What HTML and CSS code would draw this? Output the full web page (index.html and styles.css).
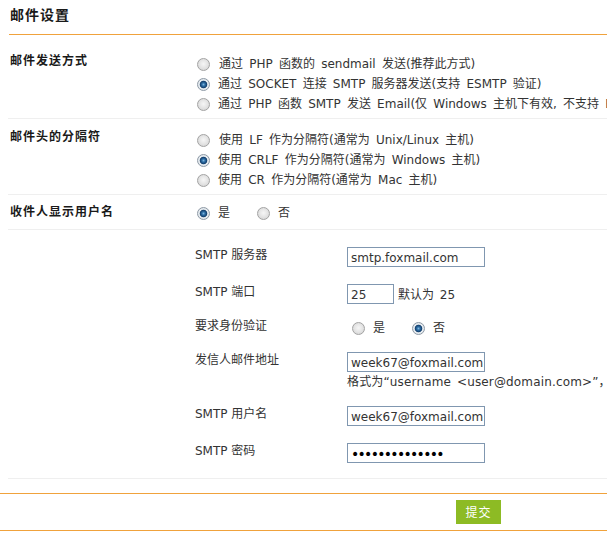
FILE: index.html
```html
<!DOCTYPE html>
<html lang="zh-CN">
<head>
<meta charset="utf-8">
<title>邮件设置</title>
<link rel="stylesheet" href="styles.css">
</head>
<body>
<div class="page">
  <div class="title-bar"><h1 class="title">邮件设置</h1></div>
  <form class="settings">
    <div class="row row-1">
      <div class="row-label">邮件发送方式</div>
      <div class="row-body">
        <label class="opt"><input class="radio" type="radio" name="mailsend"><span class="first-text">通过 PHP 函数的 sendmail 发送(推荐此方式)</span></label>
        <label class="opt"><input class="radio" type="radio" name="mailsend" checked><span>通过 SOCKET 连接 SMTP 服务器发送(支持 ESMTP 验证)</span></label>
        <label class="opt"><input class="radio" type="radio" name="mailsend"><span>通过 PHP 函数 SMTP 发送 Email(仅 Windows 主机下有效, 不支持 ESMTP 验证)</span></label>
      </div>
    </div>
    <div class="row row-2">
      <div class="row-label">邮件头的分隔符</div>
      <div class="row-body">
        <label class="opt"><input class="radio" type="radio" name="delim"><span class="first-text">使用 LF 作为分隔符(通常为 Unix/Linux 主机)</span></label>
        <label class="opt"><input class="radio" type="radio" name="delim" checked><span>使用 CRLF 作为分隔符(通常为 Windows 主机)</span></label>
        <label class="opt"><input class="radio" type="radio" name="delim"><span>使用 CR 作为分隔符(通常为 Mac 主机)</span></label>
      </div>
    </div>
    <div class="row row-3">
      <div class="row-label">收件人显示用户名</div>
      <div class="row-body inline-opts">
        <label class="opt"><input class="radio" type="radio" name="showname" checked><span>是</span></label>
        <label class="opt"><input class="radio" type="radio" name="showname"><span>否</span></label>
      </div>
    </div>
    <div class="smtp">
      <div class="field f-server">
        <div class="field-label">SMTP 服务器</div>
        <div class="field-body"><input class="text-input" type="text" value="smtp.foxmail.com"></div>
      </div>
      <div class="field f-port">
        <div class="field-label">SMTP 端口</div>
        <div class="field-body port-body"><input class="text-input port-input" type="text" value="25"><span class="port-note">默认为 25</span></div>
      </div>
      <div class="field f-auth">
        <div class="field-label">要求身份验证</div>
        <div class="field-body inline-opts auth-opts">
          <label class="opt"><input class="radio" type="radio" name="auth"><span>是</span></label>
          <label class="opt"><input class="radio" type="radio" name="auth" checked><span>否</span></label>
        </div>
      </div>
      <div class="field f-from">
        <div class="field-label">发信人邮件地址</div>
        <div class="field-body">
          <input class="text-input" type="text" value="week67@foxmail.com">
          <div class="hint">格式为“username &lt;user@domain.com&gt;”，</div>
        </div>
      </div>
      <div class="field f-user">
        <div class="field-label">SMTP 用户名</div>
        <div class="field-body"><input class="text-input" type="text" value="week67@foxmail.com"></div>
      </div>
      <div class="field f-pass">
        <div class="field-label">SMTP 密码</div>
        <div class="field-body"><input class="text-input pass-input" type="password" value="abcdefghijklmn"></div>
      </div>
    </div>
  </form>
  <div class="footer"><button class="submit" type="button">提交</button></div>
</div>
</body>
</html>
```
FILE: styles.css
```css
html, body {
  margin: 0;
  padding: 0;
  background: #fff;
  overflow: hidden;
}
body {
  font-family: "DejaVu Sans", "Noto Sans CJK SC", sans-serif;
  font-size: 12px;
  line-height: 16px;
  color: #333;
}
.title-bar {
  margin-left: 9px;
  height: 34px;
  border-bottom: 1px solid #f0a23c;
}
.title {
  margin: 0;
  padding: 7px 0 0 1px;
  font-size: 14px;
  line-height: 16px;
  font-weight: bold;
  letter-spacing: 1px;
  color: #1a1a1a;
}
.settings {
  margin: 8px 0 0 8px;
}
.row {
  display: flex;
  border-bottom: 1px solid #efefef;
}
.row-label {
  width: 189px;
  flex: none;
  box-sizing: border-box;
  padding-left: 2px;
  font-weight: bold;
  letter-spacing: 1px;
  line-height: 14px;
  color: #1a1a1a;
}
.row-body {
  flex: 1;
  min-width: 0;
}
.row-1, .row-2 {
  padding: 11px 0 4px;
}
.row-3 {
  padding: 8px 0 6px;
}
.row-3 .row-label {
  padding-top: 2px;
}
.opt {
  display: flex;
  align-items: center;
  height: 20px;
  white-space: nowrap;
  word-spacing: 2.4px;
}
.first-text {
  margin-left: 1px;
}
.radio {
  -webkit-appearance: none;
  appearance: none;
  flex: none;
  width: 13px;
  height: 13px;
  margin: 0 8px 0 0;
  box-sizing: border-box;
  border-radius: 50%;
  border: 1px solid #a3a3a3;
  background: radial-gradient(circle at 50% 45%, #f6f6f6 0, #e6e6e6 45%, #cfcfcf 100%);
}
.radio:checked {
  border-color: #8e9aa6;
  background: radial-gradient(circle at 50% 50%, #7fb4dc 0, #2c6ea6 1.6px, #143f6c 3.4px, #e9eef2 4.2px, #d6dbe0 100%);
}
.inline-opts {
  display: flex;
  align-items: center;
  height: 20px;
}
.inline-opts .opt + .opt {
  margin-left: 27px;
}
.smtp {
  padding: 17px 0 15px 187px;
  border-bottom: 1px solid #efefef;
}
.field {
  display: flex;
  align-items: flex-start;
}
.field-label {
  width: 152px;
  flex: none;
  line-height: 16px;
}
.field-body {
  flex: 1;
  min-width: 0;
}
.f-server { margin-bottom: 17px; }
.f-port { margin-bottom: 14px; }
.f-auth { margin-bottom: 14px; }
.f-from { margin-bottom: 16px; }
.f-user { margin-bottom: 17px; }
.text-input {
  display: block;
  width: 138px;
  height: 20px;
  box-sizing: border-box;
  margin: 0;
  border: 1px solid #8097b0;
  padding: 2px 0 0 3px;
  font-family: "DejaVu Sans", sans-serif;
  font-size: 12px;
  color: #333;
  background: #fff;
  outline: none;
}
.port-body {
  display: flex;
  align-items: center;
}
.port-input {
  width: 47px;
}
.port-note {
  margin-left: 4px;
  padding-top: 1px;
  word-spacing: 2px;
}
.auth-opts {
  padding-left: 5px;
}
.hint {
  margin-top: 2px;
  white-space: nowrap;
  word-spacing: 2px;
  letter-spacing: 0.15px;
}
.pass-input {
  font-size: 14px;
  letter-spacing: -1.7px;
  color: #000;
}
.footer {
  margin-top: 14px;
  border-top: 1px solid #f0a23c;
  border-bottom: 1px solid #f0a23c;
  padding: 6px 0 6px 456px;
}
.submit {
  display: block;
  width: 45px;
  height: 24px;
  margin: 0;
  padding: 0;
  border: 0;
  background: #8dbb24;
  color: #fff;
  font-family: "Noto Sans CJK SC", sans-serif;
  font-size: 12px;
  line-height: 24px;
  letter-spacing: 1px;
}
```
